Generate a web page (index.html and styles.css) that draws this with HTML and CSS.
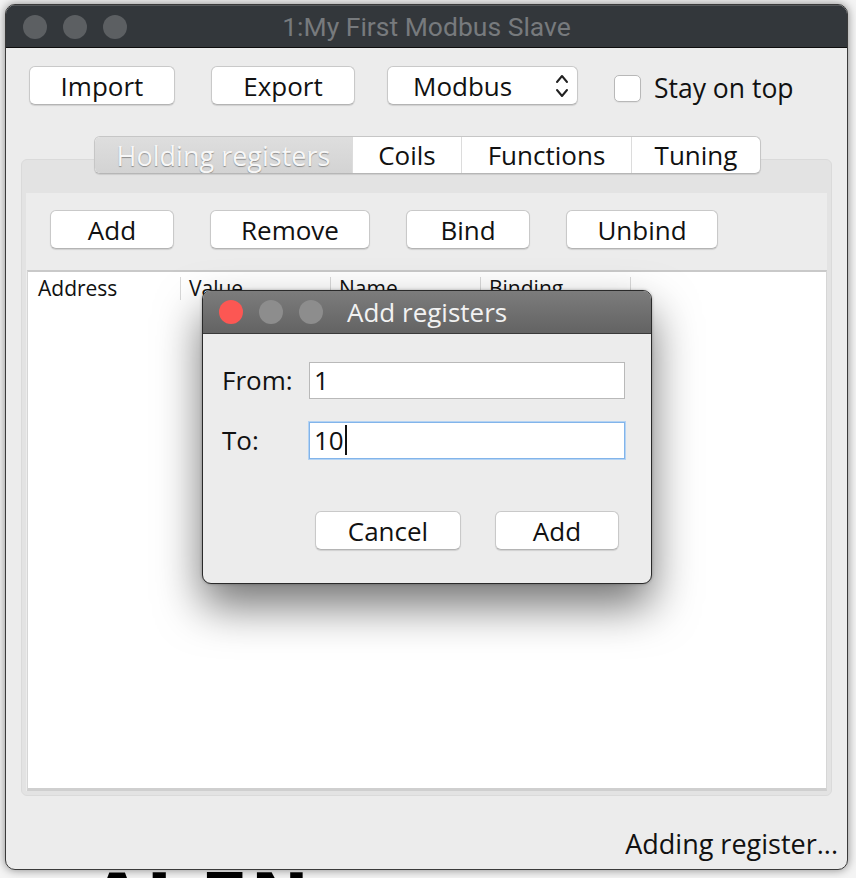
FILE: index.html
```html
<!DOCTYPE html>
<html>
<head>
<meta charset="utf-8">
<link rel="stylesheet" href="styles.css">
</head>
<body>
<div class="desk-text desk-top">AOAOAORIA</div>
<div class="desk-text desk-bottom">AI EN</div>

<div class="window">
  <div class="titlebar">
    <div class="lights">
      <span class="light"></span><span class="light"></span><span class="light"></span>
    </div>
    <div class="title">1:My First Modbus Slave</div>
  </div>
  <div class="wbody">
    <div class="toolbar">
      <button class="btn w-import">Import</button>
      <button class="btn w-export">Export</button>
      <div class="btn combo">
        <span>Modbus</span>
        <svg class="chev" width="14" height="26" viewBox="0 0 14 26"><path d="M2 9 L7 3 L12 9" fill="none" stroke="#222" stroke-width="2" stroke-linecap="round" stroke-linejoin="round"/><path d="M2 17 L7 23 L12 17" fill="none" stroke="#222" stroke-width="2" stroke-linecap="round" stroke-linejoin="round"/></svg>
      </div>
      <label class="check"><span class="box"></span><span>Stay on top</span></label>
    </div>
    <div class="tabs">
      <div class="tab sel t1">Holding registers</div>
      <div class="tab t2">Coils</div>
      <div class="tab t3">Functions</div>
      <div class="tab t4">Tuning</div>
    </div>
    <div class="pane">
      <div class="inner">
        <div class="actions">
          <button class="btn a-add">Add</button>
          <button class="btn a-remove">Remove</button>
          <button class="btn a-bind">Bind</button>
          <button class="btn a-unbind">Unbind</button>
        </div>
        <div class="table">
          <div class="thead">
            <div class="th c1">Address</div>
            <div class="th">Value</div>
            <div class="th">Name</div>
            <div class="th">Binding</div>
          </div>
        </div>
      </div>
    </div>
    <div class="status">Adding register...</div>
  </div>
</div>

<div class="dialog">
  <div class="dtitle">
    <div class="lights">
      <span class="light red"></span><span class="light g"></span><span class="light g"></span>
    </div>
    <div class="dname">Add registers</div>
  </div>
  <div class="dbody">
    <div class="frow"><span class="flabel">From:</span><div class="field">1</div></div>
    <div class="frow"><span class="flabel">To:</span><div class="field focus">10<span class="caret"></span></div></div>
    <div class="dbtns">
      <button class="btn d-cancel">Cancel</button>
      <button class="btn d-add">Add</button>
    </div>
  </div>
</div>
</body>
</html>
```
FILE: styles.css
```css
html, body {
  margin: 0;
  padding: 0;
}
body {
  width: 856px;
  height: 878px;
  overflow: hidden;
  position: relative;
  background: #f4f4f4;
  font-family: "Open Sans", "DejaVu Sans", sans-serif;
  color: #111;
}
.desk-text {
  position: absolute;
  z-index: 0;
  font-family: "DejaVu Sans", sans-serif;
  font-weight: bold;
  color: #000;
  white-space: nowrap;
  line-height: 1;
}
.desk-top { left: 64px; top: -36px; font-size: 40px; letter-spacing: 1px; }
.desk-bottom { left: 90px; top: 864px; font-size: 70px; letter-spacing: 2px; }

.window {
  position: absolute;
  left: 5px;
  top: 4px;
  width: 841px;
  height: 864px;
  border: 1px solid #3a3a3a;
  border-radius: 10px;
  background: #ececec;
  box-shadow: 0 0 10px rgba(0,0,0,0.45);
  overflow: hidden;
  display: flex;
  flex-direction: column;
  z-index: 3;
}
.titlebar {
  height: 41px;
  flex: none;
  background: #33373b;
  border-top: 1px solid #55585b;
  border-bottom: 1px solid #0e0e0e;
  position: relative;
  display: flex;
  align-items: center;
}
.lights {
  display: flex;
  gap: 16px;
  padding-left: 17px;
}
.light {
  width: 24px;
  height: 24px;
  border-radius: 50%;
  background: #5c5f62;
}
.title {
  position: absolute;
  left: 0;
  right: 0;
  top: 0;
  bottom: 0;
  text-align: center;
  font-family: Roboto, "Open Sans", sans-serif;
  font-size: 26.5px;
  line-height: 41px;
  color: #777a7d;
}
.wbody {
  flex: 1;
  display: flex;
  flex-direction: column;
  padding: 18px 15px 0 15px;
}
.btn {
  font-family: "Open Sans", "DejaVu Sans", sans-serif;
  font-size: 26px;
  color: #111;
  background: #fff;
  border: 1px solid #c9c9c9;
  border-bottom-color: #b4b4b4;
  border-radius: 6px;
  height: 39px;
  box-sizing: border-box;
  padding: 0;
  box-shadow: 0 1px 1px rgba(0,0,0,0.12);
  display: inline-flex;
  align-items: center;
  justify-content: center;
  line-height: 1;
}
.toolbar {
  display: flex;
  align-items: flex-start;
  height: 39px;
  padding-left: 8px;
}
.w-import { width: 146px; }
.w-export { width: 144px; margin-left: 36px; }
.combo {
  width: 191px;
  margin-left: 32px;
  justify-content: flex-start;
  padding-left: 25px;
  position: relative;
}
.chev {
  position: absolute;
  right: 8px;
  top: 6px;
}
.check {
  display: flex;
  align-items: center;
  margin-left: 36px;
  font-size: 26.5px;
  margin-top: 4px;
  height: 36px;
}
.box {
  width: 27px;
  height: 27px;
  box-sizing: border-box;
  background: #fff;
  border: 1px solid #b8b8b8;
  border-radius: 5px;
  margin-right: 13px;
  box-shadow: 0 1px 1px rgba(0,0,0,0.06);
}
.tabs {
  margin-top: 31px;
  align-self: center;
  display: flex;
  height: 38px;
  box-sizing: border-box;
  border: 1px solid #c6c6c6;
  border-bottom-color: #b6b6b6;
  border-radius: 6px;
  overflow: hidden;
  background: #fff;
  position: relative;
  z-index: 2;
  box-shadow: 0 1px 1px rgba(0,0,0,0.1);
  margin-left: 2px;
}
.tab {
  font-size: 26px;
  display: flex;
  align-items: center;
  justify-content: center;
  border-left: 1px solid #dcdcdc;
  line-height: 1;
}
.tab.sel {
  border-left: none;
  background: linear-gradient(#dedede, #d3d3d3);
  color: #f7f7f7;
  text-shadow: 0 1px 1px rgba(0,0,0,0.35);
  font-size: 27px;
}
.t1 { width: 257px; }
.t2 { width: 108px; }
.t3 { width: 169px; }
.t4 { width: 128px; }
.pane {
  margin-top: -15px;
  height: 637px;
  box-sizing: border-box;
  background: #e3e3e3;
  border: 1px solid #dadada;
  border-radius: 6px;
  padding: 33px 4px 4px 4px;
  position: relative;
  z-index: 1;
}
.inner {
  height: 100%;
  background: #ececec;
  display: flex;
  flex-direction: column;
}
.actions {
  display: flex;
  align-items: center;
  padding: 17px 0 0 24px;
}
.a-add { width: 124px; }
.a-remove { width: 160px; margin-left: 36px; }
.a-bind { width: 124px; margin-left: 36px; }
.a-unbind { width: 152px; margin-left: 36px; }
.table {
  margin-top: 21px;
  flex: 1;
  margin-left: 1px;
  background: #fff;
  border-top: 2px solid #c9c9c9;
  border-bottom: 3px solid #cfcfcf;
  border-left: 1px solid #d6d6d6;
  border-right: 1px solid #d6d6d6;
}
.thead {
  display: flex;
  height: 31px;
  align-items: flex-start;
}
.th {
  width: 150px;
  height: 23px;
  border-right: 1px solid #d9d9d9;
  font-size: 21px;
  line-height: 23px;
  padding-left: 8px;
  box-sizing: border-box;
  margin-top: 5px;
  white-space: nowrap;
}
.th.c1 { width: 153px; padding-left: 10px; }
.status {
  flex: 1;
  text-align: right;
  font-size: 27px;
  margin-right: -6px;
  padding-top: 29px;
}

.dialog {
  position: absolute;
  left: 202px;
  top: 290px;
  width: 448px;
  height: 292px;
  border: 1px solid #2a2a2a;
  border-radius: 9px;
  background: #ececec;
  overflow: hidden;
  box-shadow: 0 22px 45px rgba(0,0,0,0.55), 0 0 3px rgba(0,0,0,0.3);
  z-index: 10;
}
.dtitle {
  height: 42px;
  background: linear-gradient(#7c7c7c, #636363);
  border-bottom: 1px solid #3a3a3a;
  display: flex;
  align-items: center;
  position: relative;
}
.dtitle .lights { padding-left: 16px; gap: 16px; }
.light.red { background: #fc5753; }
.light.g { background: #8d8d8d; }
.dname {
  margin-left: 24px;
  font-size: 26px;
  color: #f2f2f2;
}
.dbody {
  padding: 27px 26px 0 19px;
}
.frow {
  display: flex;
  align-items: center;
  height: 38px;
  margin-bottom: 22px;
}
.flabel {
  width: 87px;
  font-size: 26px;
}
.field {
  width: 316px;
  height: 37px;
  box-sizing: border-box;
  background: #fff;
  border: 1px solid #b9b9b9;
  font-size: 26px;
  line-height: 35px;
  padding-left: 4px;
  display: flex;
  align-items: center;
}
.field.focus {
  border: 1px solid #82b4ea;
  box-shadow: 0 0 0 1px #b4d3f3;
}
.caret {
  display: inline-block;
  width: 2px;
  height: 30px;
  background: #111;
  margin-left: 1px;
}
.dbtns {
  display: flex;
  padding-left: 93px;
  margin-top: 52px;
}
.d-cancel { width: 146px; }
.d-add { width: 124px; margin-left: 34px; }
```
